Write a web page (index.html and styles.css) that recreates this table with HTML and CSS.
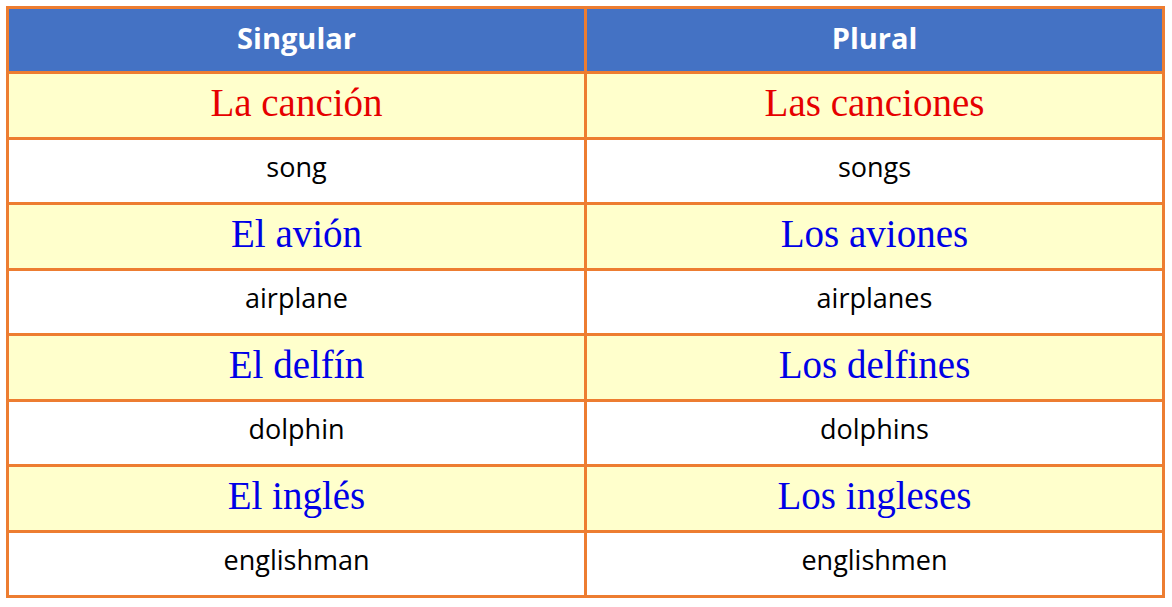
FILE: index.html
```html
<!DOCTYPE html>
<html>
<head>
<meta charset="utf-8">
<link rel="stylesheet" href="styles.css">
</head>
<body>
<table class="nouns">
  <colgroup><col class="c1"><col class="c2"></colgroup>
  <thead>
    <tr class="head"><th>Singular</th><th>Plural</th></tr>
  </thead>
  <tbody>
    <tr class="es"><td class="red">La canción</td><td class="red">Las canciones</td></tr>
    <tr class="en"><td>song</td><td>songs</td></tr>
    <tr class="es"><td class="blue">El avión</td><td class="blue">Los aviones</td></tr>
    <tr class="en"><td>airplane</td><td>airplanes</td></tr>
    <tr class="es"><td class="blue">El delfín</td><td class="blue">Los delfines</td></tr>
    <tr class="en"><td>dolphin</td><td>dolphins</td></tr>
    <tr class="es"><td class="blue">El inglés</td><td class="blue">Los ingleses</td></tr>
    <tr class="en"><td>englishman</td><td>englishmen</td></tr>
  </tbody>
</table>
</body>
</html>
```
FILE: styles.css
```css
html, body {
  margin: 0;
  padding: 0;
  background: #ffffff;
}
body {
  padding: 6px 0 0 6px;
}
.nouns {
  border-collapse: collapse;
  width: 1159px;
  table-layout: fixed;
  border: 3px solid #ED7D31;
}
.c1 { width: 578px; }
.c2 { width: auto; }
.nouns th, .nouns td {
  border: 3px solid #ED7D31;
  padding: 0;
  text-align: center;
  vertical-align: middle;
}
.head th {
  background: #4472C4;
  color: #ffffff;
  font-family: "Open Sans", sans-serif;
  font-weight: 700;
  font-size: 29px;
  line-height: 1;
  height: 56px;
  padding-bottom: 6px;
}
.es td {
  background: #FFFFCC;
  font-family: "Liberation Serif", serif;
  font-size: 39px;
  line-height: 1;
  height: 56.5px;
  padding-bottom: 6px;
}
.en td {
  background: #ffffff;
  color: #000000;
  font-family: "Open Sans", sans-serif;
  font-size: 27px;
  line-height: 1;
  height: 53.5px;
  padding-bottom: 9px;
}
.red { color: #E60000; }
.blue { color: #0000E6; }
```
